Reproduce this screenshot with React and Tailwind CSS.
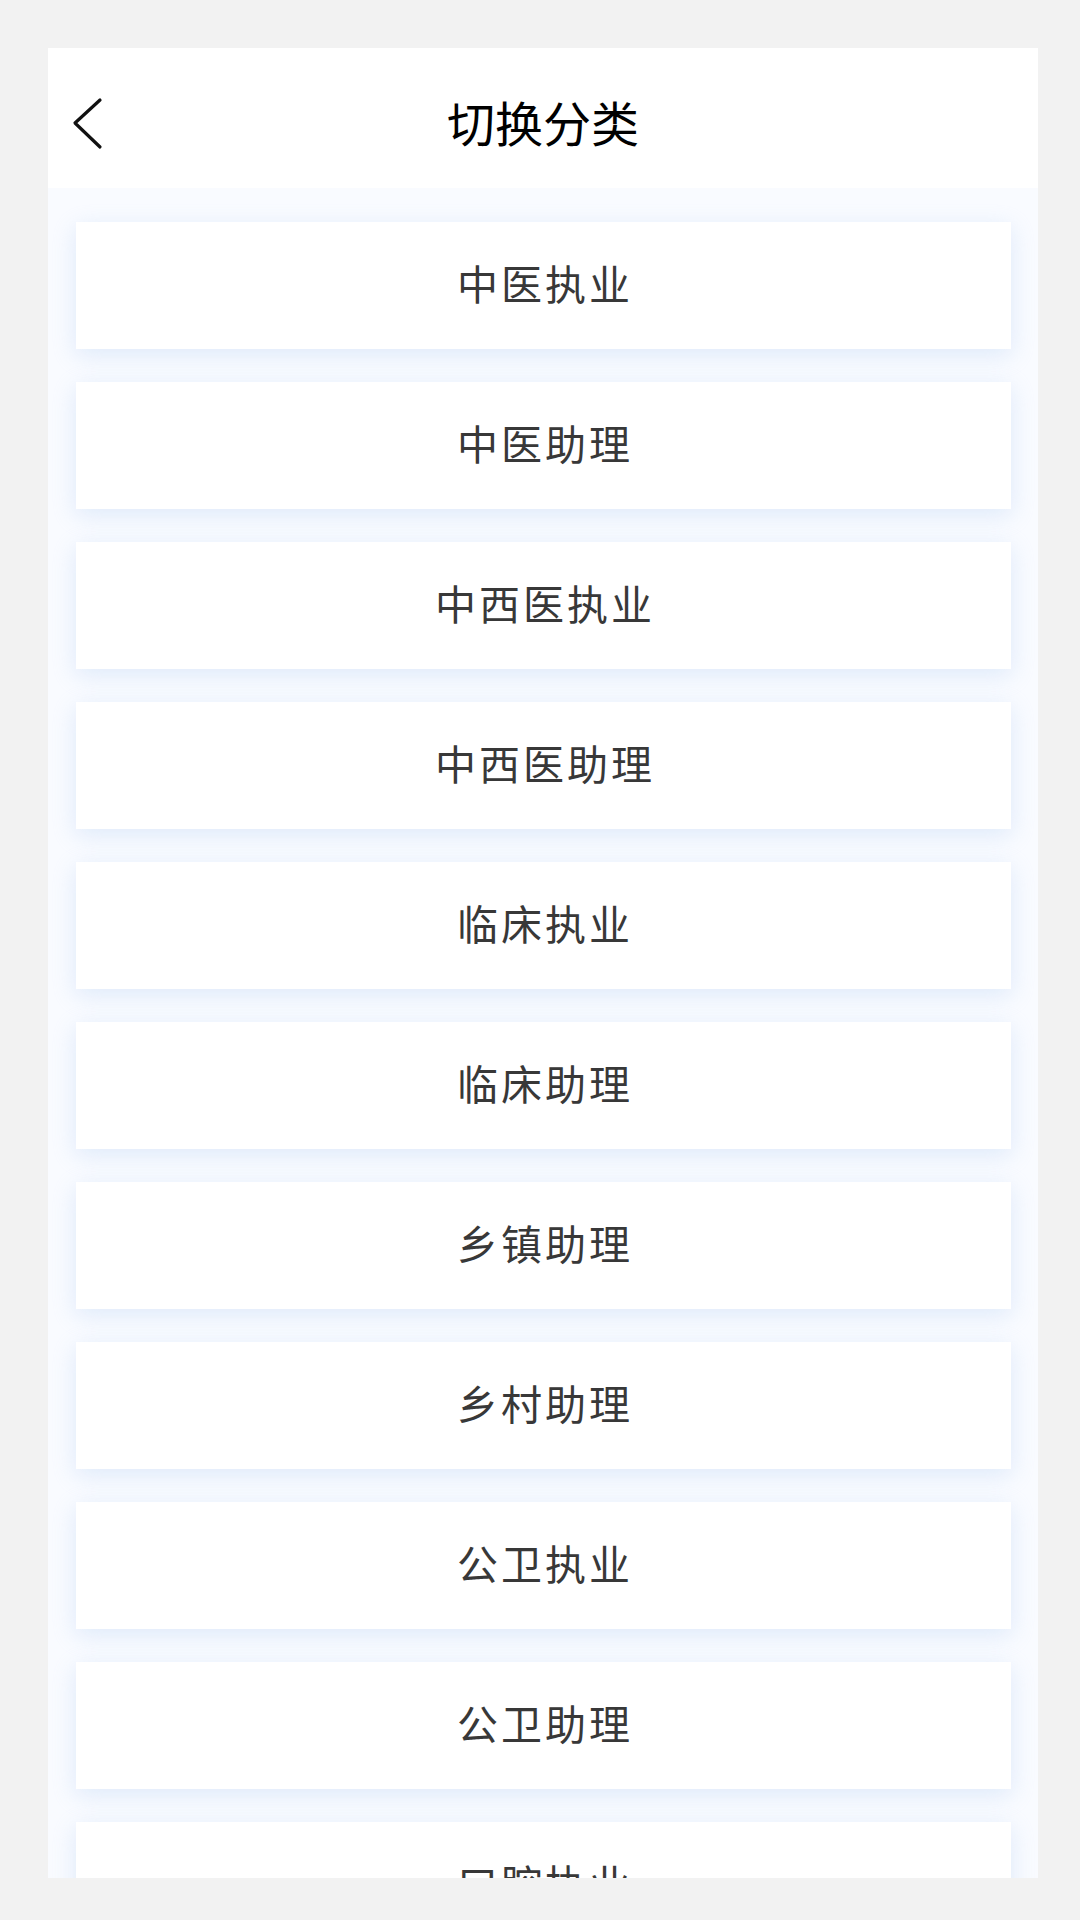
const categories = [
  "中医执业",
  "中医助理",
  "中西医执业",
  "中西医助理",
  "临床执业",
  "临床助理",
  "乡镇助理",
  "乡村助理",
  "公卫执业",
  "公卫助理",
  "口腔执业",
];

function BackIcon() {
  return (
    <svg width="34" height="54" viewBox="0 0 34 54" fill="none">
      <path
        d="M29 3 L4 26 L29 50"
        stroke="#111"
        strokeWidth="3.2"
        strokeLinecap="round"
        strokeLinejoin="round"
      />
    </svg>
  );
}

export default function App() {
  return (
    <div
      className="min-h-[1920px] w-[1080px] bg-[#f2f2f2] pt-[48px] pl-[48px] pr-[42px]"
      style={{ fontFamily: '"Noto Sans CJK SC", "Noto Sans", sans-serif' }}
    >
      <div className="h-[1830px] w-[990px] overflow-hidden bg-[#f9fbff] flex flex-col">
        <div className="relative h-[140px] shrink-0 bg-white flex items-center justify-center">
          <button className="absolute left-[23px] top-[49px]">
            <BackIcon />
          </button>
          <h1 className="text-[48px] leading-none text-black pt-[6px]">切换分类</h1>
        </div>
        <div className="flex flex-col gap-[33px] pt-[34px] pl-[28px] pr-[27px]">
          {categories.map((name) => (
            <div
              key={name}
              className="h-[127px] shrink-0 bg-white flex items-center justify-center shadow-[0_6px_22px_rgba(190,212,245,0.45)]"
            >
              <span className="text-[41px] leading-none tracking-[3px] text-[#383838] pl-[3px] pb-[6px]">
                {name}
              </span>
            </div>
          ))}
        </div>
      </div>
    </div>
  );
}
